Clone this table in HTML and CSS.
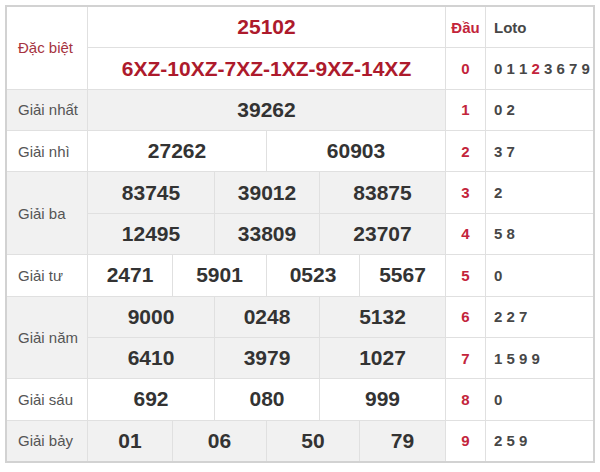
FILE: index.html
```html
<!DOCTYPE html>
<html lang="vi">
<head>
<meta charset="utf-8">
<title>Kết quả xổ số</title>
<link rel="stylesheet" href="styles.css">
</head>
<body>
<div class="board">
  <div class="lbl red-lbl h2">Đặc biệt</div>
  <div class="num red s6">25102</div>
  <div class="dau hd">Đầu</div>
  <div class="loto hd">Loto</div>

  <div class="num red s6">6XZ-10XZ-7XZ-1XZ-9XZ-14XZ</div>
  <div class="dau">0</div>
  <div class="loto">0 1 1 <span class="hl">2</span> 3 6 7 9</div>

  <div class="lbl g">Giải nhất</div>
  <div class="num g s6">39262</div>
  <div class="dau">1</div>
  <div class="loto">0 2</div>

  <div class="lbl">Giải nhì</div>
  <div class="num s3">27262</div>
  <div class="num s3">60903</div>
  <div class="dau">2</div>
  <div class="loto">3 7</div>

  <div class="lbl g h2">Giải ba</div>
  <div class="num g s2">83745</div>
  <div class="num g s2">39012</div>
  <div class="num g s2">83875</div>
  <div class="dau">3</div>
  <div class="loto">2</div>

  <div class="num g s2">12495</div>
  <div class="num g s2">33809</div>
  <div class="num g s2">23707</div>
  <div class="dau">4</div>
  <div class="loto">5 8</div>

  <div class="lbl">Giải tư</div>
  <div class="num s1">2471</div>
  <div class="num s2">5901</div>
  <div class="num s2">0523</div>
  <div class="num s1">5567</div>
  <div class="dau">5</div>
  <div class="loto">0</div>

  <div class="lbl g h2">Giải năm</div>
  <div class="num g s2">9000</div>
  <div class="num g s2">0248</div>
  <div class="num g s2">5132</div>
  <div class="dau">6</div>
  <div class="loto">2 2 7</div>

  <div class="num g s2">6410</div>
  <div class="num g s2">3979</div>
  <div class="num g s2">1027</div>
  <div class="dau">7</div>
  <div class="loto">1 5 9 9</div>

  <div class="lbl">Giải sáu</div>
  <div class="num s2">692</div>
  <div class="num s2">080</div>
  <div class="num s2">999</div>
  <div class="dau">8</div>
  <div class="loto">0</div>

  <div class="lbl g">Giải bảy</div>
  <div class="num g s1">01</div>
  <div class="num g s2">06</div>
  <div class="num g s2">50</div>
  <div class="num g s1">79</div>
  <div class="dau">9</div>
  <div class="loto">2 5 9</div>
</div>
</body>
</html>
```

FILE: styles.css
```css
html, body {
  margin: 0;
  padding: 0;
  background: #fff;
}
body {
  padding: 5px 0 0 5px;
  font-family: "Liberation Sans", Arial, sans-serif;
}
.board {
  width: 586px;
  height: 454px;
  border: 2px solid #d2d2d2;
  background: #e0e0e0;
  display: grid;
  grid-template-columns: 80px 84px 41px 51px 52px 39px 85px 39px 107px;
  grid-template-rows: repeat(11, 1fr);
  gap: 1px;
}
.board > div {
  background: #fff;
  display: flex;
  align-items: center;
}
.board > .g {
  background: #f1f1f1;
}
.lbl {
  grid-column: 1;
  padding-left: 11px;
  font-size: 15px;
  color: #555;
}
.red-lbl {
  color: #a63340;
}
.h2 {
  grid-row: span 2;
}
.num {
  justify-content: center;
  font-size: 21px;
  font-weight: bold;
  color: #333;
}
.num.red {
  color: #ad1a2c;
}
.s6 { grid-column: span 6; }
.s3 { grid-column: span 3; }
.s2 { grid-column: span 2; }
.s1 { grid-column: span 1; }
.dau {
  grid-column: 8;
  justify-content: center;
  font-size: 15px;
  font-weight: bold;
  color: #c3243b;
}
.loto {
  grid-column: 9;
  padding-left: 8px;
  font-size: 15px;
  font-weight: bold;
  color: #474747;
  white-space: pre;
}
.hl {
  color: #c3243b;
}
```
